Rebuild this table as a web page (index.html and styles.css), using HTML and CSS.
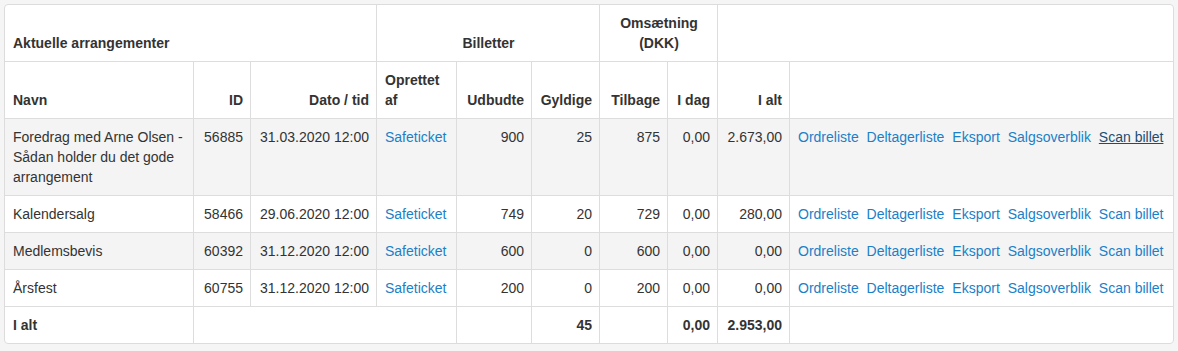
FILE: index.html
```html
<!DOCTYPE html>
<html lang="da">
<head>
<meta charset="utf-8">
<title>Aktuelle arrangementer</title>
<link rel="stylesheet" href="styles.css">
</head>
<body>
<div class="panel">
  <table class="events">
    <colgroup>
      <col class="c-navn">
      <col class="c-id">
      <col class="c-dato">
      <col class="c-opr">
      <col class="c-udb">
      <col class="c-gyl">
      <col class="c-til">
      <col class="c-idag">
      <col class="c-ialt">
      <col class="c-links">
    </colgroup>
    <thead>
      <tr>
        <th colspan="3">Aktuelle arrangementer</th>
        <th colspan="3" class="center">Billetter</th>
        <th colspan="2" class="center">Omsætning<br>(DKK)</th>
        <th colspan="2" class="last"></th>
      </tr>
      <tr>
        <th>Navn</th>
        <th class="num">ID</th>
        <th class="num">Dato / tid</th>
        <th>Oprettet<br>af</th>
        <th class="num">Udbudte</th>
        <th class="num">Gyldige</th>
        <th class="num">Tilbage</th>
        <th class="num">I dag</th>
        <th class="num">I alt</th>
        <th class="last"></th>
      </tr>
    </thead>
    <tbody>
      <tr class="odd">
        <td>Foredrag med Arne Olsen - Sådan holder du det gode arrangement</td>
        <td class="num">56885</td>
        <td class="num">31.03.2020 12:00</td>
        <td><a href="#">Safeticket</a></td>
        <td class="num">900</td>
        <td class="num">25</td>
        <td class="num">875</td>
        <td class="num">0,00</td>
        <td class="num">2.673,00</td>
        <td class="last links"><a href="#">Ordreliste</a> <a href="#">Deltagerliste</a> <a href="#">Eksport</a> <a href="#">Salgsoverblik</a> <a href="#" class="hover">Scan billet</a></td>
      </tr>
      <tr>
        <td>Kalendersalg</td>
        <td class="num">58466</td>
        <td class="num">29.06.2020 12:00</td>
        <td><a href="#">Safeticket</a></td>
        <td class="num">749</td>
        <td class="num">20</td>
        <td class="num">729</td>
        <td class="num">0,00</td>
        <td class="num">280,00</td>
        <td class="last links"><a href="#">Ordreliste</a> <a href="#">Deltagerliste</a> <a href="#">Eksport</a> <a href="#">Salgsoverblik</a> <a href="#">Scan billet</a></td>
      </tr>
      <tr class="odd">
        <td>Medlemsbevis</td>
        <td class="num">60392</td>
        <td class="num">31.12.2020 12:00</td>
        <td><a href="#">Safeticket</a></td>
        <td class="num">600</td>
        <td class="num">0</td>
        <td class="num">600</td>
        <td class="num">0,00</td>
        <td class="num">0,00</td>
        <td class="last links"><a href="#">Ordreliste</a> <a href="#">Deltagerliste</a> <a href="#">Eksport</a> <a href="#">Salgsoverblik</a> <a href="#">Scan billet</a></td>
      </tr>
      <tr>
        <td>Årsfest</td>
        <td class="num">60755</td>
        <td class="num">31.12.2020 12:00</td>
        <td><a href="#">Safeticket</a></td>
        <td class="num">200</td>
        <td class="num">0</td>
        <td class="num">200</td>
        <td class="num">0,00</td>
        <td class="num">0,00</td>
        <td class="last links"><a href="#">Ordreliste</a> <a href="#">Deltagerliste</a> <a href="#">Eksport</a> <a href="#">Salgsoverblik</a> <a href="#">Scan billet</a></td>
      </tr>
    </tbody>
    <tfoot>
      <tr>
        <th>I alt</th>
        <th colspan="3"></th>
        <th></th>
        <th class="num">45</th>
        <th></th>
        <th class="num">0,00</th>
        <th class="num">2.953,00</th>
        <th class="last"></th>
      </tr>
    </tfoot>
  </table>
</div>
</body>
</html>
```

FILE: styles.css
```css
html, body {
  background: #f5f5f5;
}
body {
  margin: 4px;
  font-family: "Liberation Sans", Arial, Helvetica, sans-serif;
  font-size: 14px;
  line-height: 20px;
  color: #333;
}
.panel {
  background: #fff;
  border: 1px solid #dcdcdc;
  border-radius: 4px;
  overflow: hidden;
  width: 1168px;
}
.events {
  width: 1168px;
  table-layout: fixed;
  border-collapse: separate;
  border-spacing: 0;
}
.c-navn { width: 189px; }
.c-id { width: 57px; }
.c-dato { width: 126px; }
.c-opr { width: 80px; }
.c-udb { width: 75px; }
.c-gyl { width: 68px; }
.c-til { width: 68px; }
.c-idag { width: 50px; }
.c-ialt { width: 72px; }
.c-links { width: 383px; }

.events th,
.events td {
  padding: 8px 7px 8px 8px;
  text-align: left;
  vertical-align: top;
  border-right: 1px solid #dddddd;
  border-bottom: 1px solid #dddddd;
}
.events th {
  font-weight: bold;
}
.events thead th {
  vertical-align: bottom;
}
.events tfoot th {
  border-bottom: none;
}
.events .last {
  border-right: none;
}
.events .num {
  text-align: right;
}
.events .center {
  text-align: center;
}
.events tr.odd td {
  background: #f4f4f4;
}
.links {
  white-space: nowrap;
}
a {
  color: #1a80c8;
  text-decoration: none;
}
.links a {
  margin-right: 4px;
}
.links a:last-child {
  margin-right: 0;
}
a.hover {
  color: #1d4d72;
  text-decoration: underline;
}
```
